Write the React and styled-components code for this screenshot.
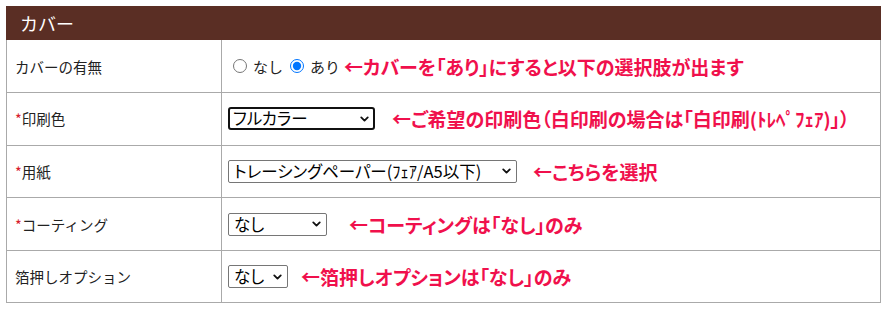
import React from "react";
import styled, { createGlobalStyle } from "styled-components";
import { ChevronDown } from "lucide-react";

const GlobalStyle = createGlobalStyle`
  body {
    margin: 6px;
    background: #ffffff;
    font-family: "Noto Sans CJK JP", "Noto Sans", sans-serif;
    color: #222;
  }
`;

const Panel = styled.section`
  width: 875px;
`;

const Header = styled.h2`
  margin: 0;
  height: 34px;
  display: flex;
  align-items: center;
  padding: 0 14px;
  background-color: #5a2e24;
  color: #ffffff;
  font-size: 18px;
  font-weight: normal;
`;

const Table = styled.table`
  width: 100%;
  border-collapse: collapse;
  border: 1px solid #aaaaaa;
  border-top: 0;
`;

const Row = styled.tr`
  height: 52.6px;
  border-bottom: 1px solid #aaaaaa;
`;

const Label = styled.th`
  width: 206px;
  padding: 0 0 0 8px;
  text-align: left;
  font-size: 14.5px;
  font-weight: normal;
  color: #222;
  border-right: 1px solid #aaaaaa;
`;

const Required = styled.span`
  color: #d8202c;
`;

const Cell = styled.td`
  padding: 0 6px;
`;

const Line = styled.div`
  display: flex;
  align-items: center;
  gap: ${(p) => p.gap ?? 16}px;
`;

const RadioGroup = styled.div`
  display: flex;
  align-items: center;
  font-size: 15px;
  color: #222;

  label {
    display: flex;
    align-items: center;
    margin-right: 2px;
  }
  input {
    margin: 0 6px 0 5px;
    width: 14px;
    height: 14px;
  }
`;

const SelectWrap = styled.span`
  position: relative;
  display: inline-flex;
  flex: none;

  svg {
    position: absolute;
    right: 4px;
    top: 50%;
    transform: translateY(-50%);
    pointer-events: none;
    color: #111;
  }
`;

const Select = styled.select`
  appearance: none;
  box-sizing: border-box;
  height: 23px;
  width: ${(p) => p.width}px;
  font-family: "Noto Sans CJK JP", sans-serif;
  font-size: 16.5px;
  font-feature-settings: "palt";
  line-height: 19px;
  color: #000;
  background: #fff;
  border: ${(p) => (p.focused ? "2px solid #111" : "1px solid #767676")};
  border-radius: ${(p) => (p.focused ? "3px" : "2px")};
  padding: 0 16px 0 ${(p) => (p.focused ? 3 : 5)}px;
  margin: 0;
`;

const Note = styled.span`
  color: #f0104c;
  font-size: 19px;
  font-weight: bold;
  font-feature-settings: "palt";
  white-space: nowrap;
`;

const Dropdown = ({ width, focused, children, defaultValue }) => (
  <SelectWrap>
    <Select width={width} focused={focused} defaultValue={defaultValue}>
      {children}
    </Select>
    <ChevronDown size={13} strokeWidth={3.4} />
  </SelectWrap>
);

const App = () => {
  return (
    <Panel>
      <GlobalStyle />
      <Header>カバー</Header>
      <Table>
        <tbody>
          <Row>
            <Label>カバーの有無</Label>
            <Cell>
              <Line gap={2}>
                <RadioGroup>
                  <label>
                    <input type="radio" name="cover" />
                    なし
                  </label>
                  <label>
                    <input type="radio" name="cover" defaultChecked />
                    あり
                  </label>
                </RadioGroup>
                <Note>←カバーを「あり」にすると以下の選択肢が出ます</Note>
              </Line>
            </Cell>
          </Row>
          <Row>
            <Label>
              <Required>*</Required>印刷色
            </Label>
            <Cell>
              <Line gap={17}>
                <Dropdown width={147} focused defaultValue="full">
                  <option value="full">フルカラー</option>
                  <option value="white">白印刷(トレペフェア)</option>
                </Dropdown>
                <Note>←ご希望の印刷色（白印刷の場合は「白印刷(ﾄﾚﾍﾟﾌｪｱ)」）</Note>
              </Line>
            </Cell>
          </Row>
          <Row>
            <Label>
              <Required>*</Required>用紙
            </Label>
            <Cell>
              <Line gap={16}>
                <Dropdown width={289}>
                  <option>トレーシングペーパー(ﾌｪｱ/A5以下)</option>
                </Dropdown>
                <Note>←こちらを選択</Note>
              </Line>
            </Cell>
          </Row>
          <Row>
            <Label>
              <Required>*</Required>コーティング
            </Label>
            <Cell>
              <Line gap={22}>
                <Dropdown width={99}>
                  <option>なし</option>
                </Dropdown>
                <Note>←コーティングは「なし」のみ</Note>
              </Line>
            </Cell>
          </Row>
          <Row>
            <Label>箔押しオプション</Label>
            <Cell>
              <Line gap={13}>
                <Dropdown width={60}>
                  <option>なし</option>
                </Dropdown>
                <Note>←箔押しオプションは「なし」のみ</Note>
              </Line>
            </Cell>
          </Row>
        </tbody>
      </Table>
    </Panel>
  );
};

export default App;
